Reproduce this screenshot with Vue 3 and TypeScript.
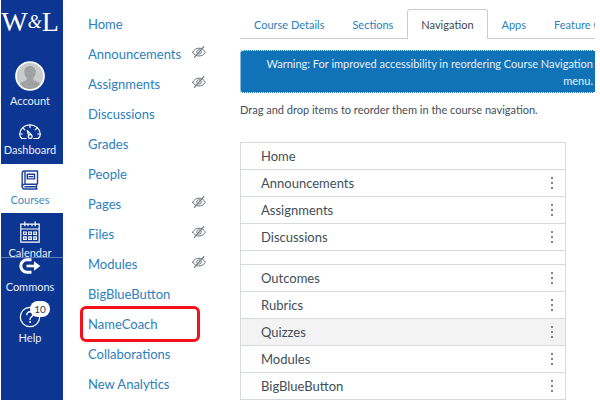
<script setup lang="ts">
interface CourseLink {
  label: string
  hidden?: boolean
  marked?: boolean
}

const courseLinks: CourseLink[] = [
  { label: 'Home' },
  { label: 'Announcements', hidden: true },
  { label: 'Assignments', hidden: true },
  { label: 'Discussions' },
  { label: 'Grades' },
  { label: 'People' },
  { label: 'Pages', hidden: true },
  { label: 'Files', hidden: true },
  { label: 'Modules', hidden: true },
  { label: 'BigBlueButton' },
  { label: 'NameCoach', marked: true },
  { label: 'Collaborations' },
  { label: 'New Analytics' },
]

const tabs = ['Course Details', 'Sections', 'Navigation', 'Apps', 'Feature Options']
const activeTab = 'Navigation'

const upperItems = ['Home', 'Announcements', 'Assignments', 'Discussions']
const lowerItems = ['Outcomes', 'Rubrics', 'Quizzes', 'Modules', 'BigBlueButton']
</script>

<template>
  <div class="page">
    <nav class="global" aria-label="Global">
      <a class="logo" href="#"><span>W</span><span class="amp">&amp;</span><span>L</span></a>

      <a class="item account" href="#">
        <svg width="30" height="30" viewBox="0 0 30 30">
          <circle cx="15" cy="15" r="14" fill="#c9cbcd" />
          <path d="M15 5c3.500 0 5.700 2.400 5.700 5.900 0 2.600-1 4.700-2.400 5.800v2c1 1.500 5.400 1.800 6.900 4.200A13.500 13.500 0 0 1 15 28.500 13.500 13.500 0 0 1 4.800 22.900c1.600-2.400 6-2.700 6.900-4.200v-2c-1.400-1.100-2.400-3.200-2.400-5.800C9.300 7.400 11.500 5 15 5z" fill="#9fa1a3" />
          <circle cx="15" cy="15" r="14" fill="none" stroke="#fff" stroke-width="1.700" />
        </svg>
        <span>Account</span>
      </a>

      <a class="item dashboard" href="#">
        <svg width="22" height="16" viewBox="0 0 22 16" fill="none" stroke="#fff" stroke-width="1.200" stroke-linecap="round" stroke-linejoin="round">
          <path d="M2.800 14.500C.9 12.500.7 10.800.7 10.200.9 4.800 5.400.9 11 .9s10.100 3.900 10.300 9.300c0 .6-.2 2.300-2.100 4.300h-4.400" />
          <path d="M2.800 14.500h4.400M11 1v2.600M4.300 4.400l1.500 1.500M17.700 4.400l-1.500 1.500M1 10h2.300M18.700 10H21" />
          <path d="M8.300 6.600l1.400 5.200M8.300 6.600l4 4" />
          <circle cx="11.200" cy="12.500" r="1.900" />
        </svg>
        <span>Dashboard</span>
      </a>

      <a class="item courses" href="#" aria-current="page">
        <svg width="18" height="20" viewBox="0 0 18 20" fill="none" stroke="#1b419c" stroke-width="1.400" stroke-linejoin="round">
          <path d="M16.500 14.300V1H3.500C2 1 1.200 1.900 1.200 3.200v13.400" />
          <path d="M16.500 14.300H3.400c-1.400 0-2.200.9-2.200 2.300s.8 2.400 2.200 2.400h13.100M15.500 14.500V19M3.400 16.700h12M4 1.200v13" />
          <path d="M6.300 4.300h7.200v4.600H6.300zM7.500 6.600h4.800" />
        </svg>
        <span>Courses</span>
      </a>

      <a class="item calendar" href="#">
        <svg width="20" height="22" viewBox="0 0 20 22" fill="none" stroke="#fff" stroke-width="1.200">
          <path d="M.8 3.200h18.400v17.900H.8zM.8 8h18.400" />
          <path d="M4.800.6v4.600M15.200.6v4.600M8 3.200v2M12 3.200v2" />
          <path d="M3.600 11h2.600v2.500H3.600zM8.700 11h2.600v2.500H8.700zM13.800 11h2.600v2.500h-2.600zM3.600 15.800h2.600v2.500H3.600zM8.700 15.800h2.600v2.500H8.700zM13.800 15.800h2.600v2.500h-2.600z" />
        </svg>
        <span>Calendar</span>
      </a>

      <a class="item commons" href="#">
        <svg width="22" height="16" viewBox="0 0 22 16" fill="none" stroke="#fff">
          <path d="M12.500 1.800H8a6.200 6.200 0 0 0 0 12.400h4.500" stroke-width="3" />
          <path d="M7.500 8H17" stroke-width="2.600" />
          <path d="M15 3.200L21.300 8 15 12.800z" fill="#fff" stroke="none" />
        </svg>
        <span>Commons</span>
      </a>

      <a class="item help" href="#">
        <span class="help-icon">
          <svg width="22" height="22" viewBox="0 0 22 22" fill="none" stroke="#fff" stroke-linecap="round">
            <circle cx="11" cy="11" r="9.700" stroke-width="1.200" />
            <path d="M7.900 8.700c0-1.900 1.300-3 3.100-3s3.100 1.100 3.100 2.800c0 2.300-3.100 2.400-3.100 5" stroke-width="1.400" />
            <circle cx="11" cy="16" r=".5" fill="#fff" />
          </svg>
          <b class="badge">10</b>
        </span>
        <span>Help</span>
      </a>
    </nav>

    <nav class="course" aria-label="Course">
      <a
        v-for="link in courseLinks"
        :key="link.label"
        class="course-link"
        :class="{ marked: link.marked }"
        href="#"
      >
        <span>{{ link.label }}</span>
        <svg v-if="link.hidden" class="eye" width="14" height="12" viewBox="0 0 14 12" fill="none" stroke="#6c757c" stroke-linecap="round">
          <path d="M.7 6.200C2.200 3.500 4.300 2.200 7 2.200s4.800 1.300 6.300 4C11.800 8.700 9.700 10 7 10S2.200 8.700.7 6.200z" />
          <path d="M7.800 3.800C5.900 3.500 4.700 4.600 4.700 6c0 .9.400 1.500 1 1.900M9.300 5.200c.3 1.800-.8 3-2.300 3" />
          <path d="M11.800.7L2.500 11.300" stroke-width="1.200" />
        </svg>
      </a>
    </nav>

    <main class="content">
      <div class="tabs" role="tablist">
        <button
          v-for="tab in tabs"
          :key="tab"
          class="tab"
          :class="{ active: tab === activeTab }"
          type="button"
          role="tab"
          :aria-selected="tab === activeTab"
        >{{ tab }}</button>
      </div>

      <div class="alert" role="alert">
        Warning: For improved accessibility in reordering Course Navigation<br />menu.
      </div>

      <p class="hint">Drag and drop items to reorder them in the course navigation.</p>

      <ul class="items">
        <li v-for="name in upperItems" :key="name" class="row">
          <span>{{ name }}</span>
          <button v-if="name !== 'Home'" class="kebab" type="button" :aria-label="`${name} settings`">
            <i></i><i></i><i></i>
          </button>
        </li>
        <li class="gap"></li>
        <li v-for="name in lowerItems" :key="name" class="row" :class="{ hovered: name === 'Quizzes' }">
          <span>{{ name }}</span>
          <button class="kebab" type="button" :aria-label="`${name} settings`">
            <i></i><i></i><i></i>
          </button>
        </li>
      </ul>
    </main>
  </div>
</template>

<style>
body {
  margin: 0;
  overflow: hidden;
  background: #fff;
}
</style>

<style scoped>
.page {
  display: flex;
  height: 100vh;
  overflow: hidden;
  box-sizing: border-box;
  padding: 0 5px 0 1px;
  font-family: Lato, 'Liberation Sans', sans-serif;
  font-size: 13px;
  color: #424e58;
}

a {
  text-decoration: none;
}

button {
  font: inherit;
  border: 0;
  background: none;
}

svg {
  display: block;
  flex: none;
}

.global {
  display: flex;
  flex: 0 0 62px;
  flex-direction: column;
  background: #0d3692;
}

.logo {
  display: flex;
  justify-content: center;
  height: 38px;
  padding: 5px 4px 0 0;
  box-sizing: border-box;
  color: #fff;
  font: 28px/34px 'Liberation Serif', serif;
}

.amp {
  font-size: 18px;
  font-style: italic;
}

.item {
  display: flex;
  flex-direction: column;
  align-items: center;
  gap: 2px;
  padding-right: 4px;
  color: #e9eef8;
  font-size: 11px;
  line-height: 16px;
}

.account {
  padding-top: 23px;
}

.dashboard {
  padding-top: 15px;
  padding-bottom: 6px;
}

.courses {
  padding-top: 6px;
  padding-bottom: 5px;
  background: #fff;
  color: #3d8cc4;
}

.calendar {
  height: 36px;
  padding-top: 8px;
  border-bottom: 1px solid #5f7cba;
}

.commons {
  gap: 5px;
}

.help {
  padding-top: 11px;
}

.help-icon {
  position: relative;
}

.badge {
  position: absolute;
  top: -5px;
  left: 11px;
  width: 20px;
  border-radius: 8px;
  background: #fff;
  color: #333d45;
  font-size: 10px;
  font-weight: 400;
  line-height: 16px;
  text-align: center;
}

.course {
  display: flex;
  flex: 0 0 120px;
  flex-direction: column;
  padding: 9px 40px 0 17px;
}

.course-link {
  display: flex;
  flex: none;
  align-items: center;
  justify-content: space-between;
  height: 30px;
  padding: 0 10px 0 8px;
  box-sizing: border-box;
  color: #2b80bd;
}

.eye {
  margin: 0 -16px 4px 0;
}

.eye,
.course-link span {
  flex: none;
}

.course-link.marked {
  height: 36px;
  margin: -3px 0;
  padding-left: 5px;
  border: 3px solid #f5101c;
  border-radius: 6px;
}

.content {
  flex: 1;
  min-width: 0;
  overflow: hidden;
}

.tabs {
  display: flex;
  height: 39px;
  padding-top: 9px;
  box-sizing: border-box;
  box-shadow: inset 0 -1px #c7cdd1;
}

.tab {
  flex: none;
  padding: 0 13px;
  border: 1px solid transparent;
  border-bottom: 0;
  color: #2b80bd;
  font-size: 11px;
  white-space: nowrap;
}

.tab.active {
  border-color: #c7cdd1;
  border-radius: 3px 3px 0 0;
  background: #fff;
  color: #3c4851;
}

.alert {
  margin-top: 11px;
  padding: 4px 2px 3px 0;
  border: 1px dotted #fff;
  border-right: 0;
  border-radius: 3px 0 0 3px;
  background: #1173b7;
  color: #e6f0f8;
  font-size: 11px;
  line-height: 17px;
  text-align: right;
  white-space: nowrap;
}

.hint {
  margin: 8px 0 23px;
  font-size: 11px;
  line-height: 18px;
}

.items {
  margin: 0 29px 0 0;
  padding: 0;
  border: 1px solid #d5dadd;
  list-style: none;
}

.row {
  display: flex;
  align-items: center;
  justify-content: space-between;
  height: 27px;
  padding: 0 8px 0 20px;
  box-sizing: border-box;
  border-bottom: 1px solid #d5dadd;
}

.row.hovered {
  background: #f3f3f3;
}

.gap {
  height: 14px;
  box-sizing: border-box;
  border-bottom: 1px solid #d5dadd;
}

.kebab {
  display: flex;
  flex-direction: column;
  align-items: center;
  gap: 3px;
  width: 10px;
  padding: 0;
}

.kebab i {
  width: 2px;
  height: 2px;
  border-radius: 1px;
  background: #56616a;
}
</style>
